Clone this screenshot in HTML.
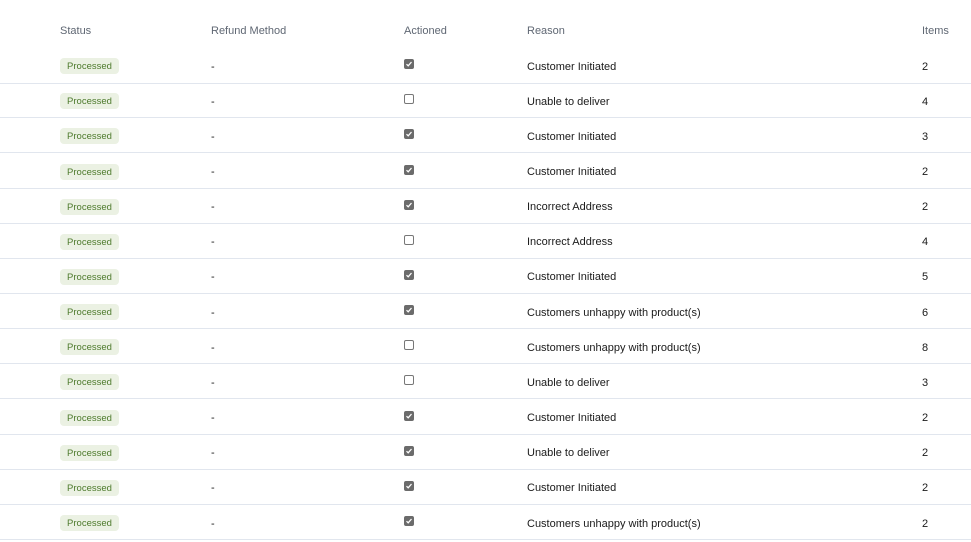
<!DOCTYPE html><html><head><style>
body{margin:0;width:971px;height:542px;background:#fff;font-family:"Segoe UI","Liberation Sans",sans-serif;font-size:11px;color:#1a1a1a;position:relative;overflow:hidden}
.h{position:absolute;top:25px;color:#5f6773;font-size:11px}
.r{position:absolute;left:0;width:971px;height:35px;border-bottom:1px solid #e1e6ee;box-sizing:border-box}
.r>*{position:absolute;top:50%;transform:translateY(-50%)}
.r>.m,.r>.t,.r>.n{margin-top:1.5px}
.b{left:60px;width:59px;height:16px;background:#ebf1e3;color:#4d7a2c;border-radius:4px;font-size:9.5px;line-height:17px;text-align:center;margin-top:1px}
.m{left:211px}
.c{left:404px;width:10px;height:10px;box-sizing:border-box;border:1px solid #777;border-radius:2px;background:#fff;margin-top:-1px}
.c.k{background:#6b6b6b;border-color:#6b6b6b}
.c svg{position:absolute;left:0;top:0}
.t{left:527px}.n{left:922px}
</style></head><body>
<div class="h" style="left:60px">Status</div>
<div class="h" style="left:211px">Refund Method</div>
<div class="h" style="left:404px">Actioned</div>
<div class="h" style="left:527px">Reason</div>
<div class="h" style="left:922px">Items</div>
<div id="rows"></div>
<script>
var d=[[1,"Customer Initiated",2],[0,"Unable to deliver",4],[1,"Customer Initiated",3],[1,"Customer Initiated",2],[1,"Incorrect Address",2],[0,"Incorrect Address",4],[1,"Customer Initiated",5],[1,"Customers unhappy with product(s)",6],[0,"Customers unhappy with product(s)",8],[0,"Unable to deliver",3],[1,"Customer Initiated",2],[1,"Unable to deliver",2],[1,"Customer Initiated",2],[1,"Customers unhappy with product(s)",2]];
var ck='<svg width="8" height="8" viewBox="0 0 8 8"><path d="M1.5 4.2 L3.2 5.8 L6.5 2" fill="none" stroke="#fff" stroke-width="1.3"/></svg>';
var h="";d.forEach(function(x,i){var t=48+i*35.15;h+='<div class="r" style="top:'+t+'px;height:'+(i==0?35.5:35.15)+'px"><div class="b">Processed</div><div class="m">-</div><div class="c'+(x[0]?' k':'')+'">'+(x[0]?ck:'')+'</div><div class="t">'+x[1]+'</div><div class="n">'+x[2]+'</div></div>'});
document.getElementById("rows").innerHTML=h;
</script>
</body></html>
